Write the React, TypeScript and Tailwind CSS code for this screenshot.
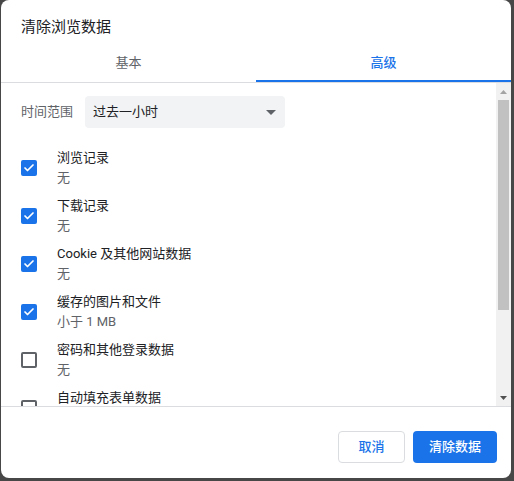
import { Check } from 'lucide-react';

type DataRow = {
  label: string;
  detail: string;
  checked: boolean;
};

const ROWS: DataRow[] = [
  { label: '浏览记录', detail: '无', checked: true },
  { label: '下载记录', detail: '无', checked: true },
  { label: 'Cookie 及其他网站数据', detail: '无', checked: true },
  { label: '缓存的图片和文件', detail: '小于 1 MB', checked: true },
  { label: '密码和其他登录数据', detail: '无', checked: false },
  { label: '自动填充表单数据', detail: '无', checked: false },
];

const FONT = { fontFamily: 'Roboto, "Noto Sans CJK SC", sans-serif' };

function Checkbox({ checked }: { checked: boolean }) {
  if (checked) {
    return (
      <span className="flex h-4 w-4 shrink-0 items-center justify-center rounded-[2px] bg-[#1a73e8]">
        <Check className="h-3 w-3 text-white" strokeWidth={3.5} aria-hidden />
      </span>
    );
  }
  return <span className="h-4 w-4 shrink-0 rounded-[2px] border-2 border-[#5f6368]" />;
}

function Scrollbar() {
  return (
    <div className="flex w-[15px] shrink-0 flex-col bg-[#f1f1f1]">
      <div className="flex h-[17px] items-center justify-center">
        <svg width="7" height="4" viewBox="0 0 7 4" aria-hidden>
          <path d="M0 4 L3.5 0 L7 4 Z" fill="#a3a3a3" />
        </svg>
      </div>
      <div className="mx-[2px] h-[210px] bg-[#c1c1c1]" />
      <div className="flex-1" />
      <div className="flex h-[17px] items-center justify-center">
        <svg width="7" height="4" viewBox="0 0 7 4" aria-hidden>
          <path d="M0 0 L7 0 L3.5 4 Z" fill="#505050" />
        </svg>
      </div>
    </div>
  );
}

export default function App() {
  return (
    <div className="h-[481px] w-[514px] bg-[#474747] pb-[3px] pl-px pr-[3px]" style={FONT}>
      <div className="flex h-full flex-col overflow-hidden rounded-lg bg-white">
        <div className="h-[46px] shrink-0 px-5 pt-[17px] text-[15px] leading-[20px] text-[#202124]">
          清除浏览数据
        </div>

        <div className="flex h-[37px] shrink-0 border-b border-[#dadce0] text-[13px]">
          <div className="flex flex-1 items-center justify-center pb-[3px] text-[#5f6368]">基本</div>
          <div className="relative flex flex-1 items-center justify-center pb-[3px] font-medium text-[#1a73e8]">
            高级
            <span className="absolute inset-x-0 bottom-0 h-[2px] bg-[#1a73e8]" />
          </div>
        </div>

        <div className="flex h-[323px] shrink-0">
          <div className="flex-1 overflow-hidden pt-[13px]">
            <div className="flex h-8 items-center px-5">
              <span className="w-16 text-[13px] text-[#5f6368]">时间范围</span>
              <div className="flex h-8 w-[200px] items-center justify-between rounded bg-[#f1f3f4] pl-2 pr-[9px] text-[13px] text-[#202124]">
                <span>过去一小时</span>
                <svg width="10" height="5" viewBox="0 0 10 5" aria-hidden>
                  <path d="M0 0 L10 0 L5 5 Z" fill="#5f6368" />
                </svg>
              </div>
            </div>

            <div className="mt-4">
              {ROWS.map((row) => (
                <div key={row.label} className="flex h-12 items-center gap-5 px-5">
                  <Checkbox checked={row.checked} />
                  <div className="text-[13px] leading-[20px]">
                    <div className="text-[#202124]">{row.label}</div>
                    <div className="text-[#5f6368]">{row.detail}</div>
                  </div>
                </div>
              ))}
            </div>
          </div>
          <Scrollbar />
        </div>

        <div className="flex flex-1 items-start justify-end gap-2 border-t border-[#dadce0] pr-[14px] pt-6">
          <button className="h-8 w-[67px] rounded border border-[#dadce0] bg-white text-[13px] font-medium text-[#1a73e8]">
            取消
          </button>
          <button className="h-8 w-[84px] rounded bg-[#1a73e8] text-[13px] font-medium text-white">
            清除数据
          </button>
        </div>
      </div>
    </div>
  );
}
